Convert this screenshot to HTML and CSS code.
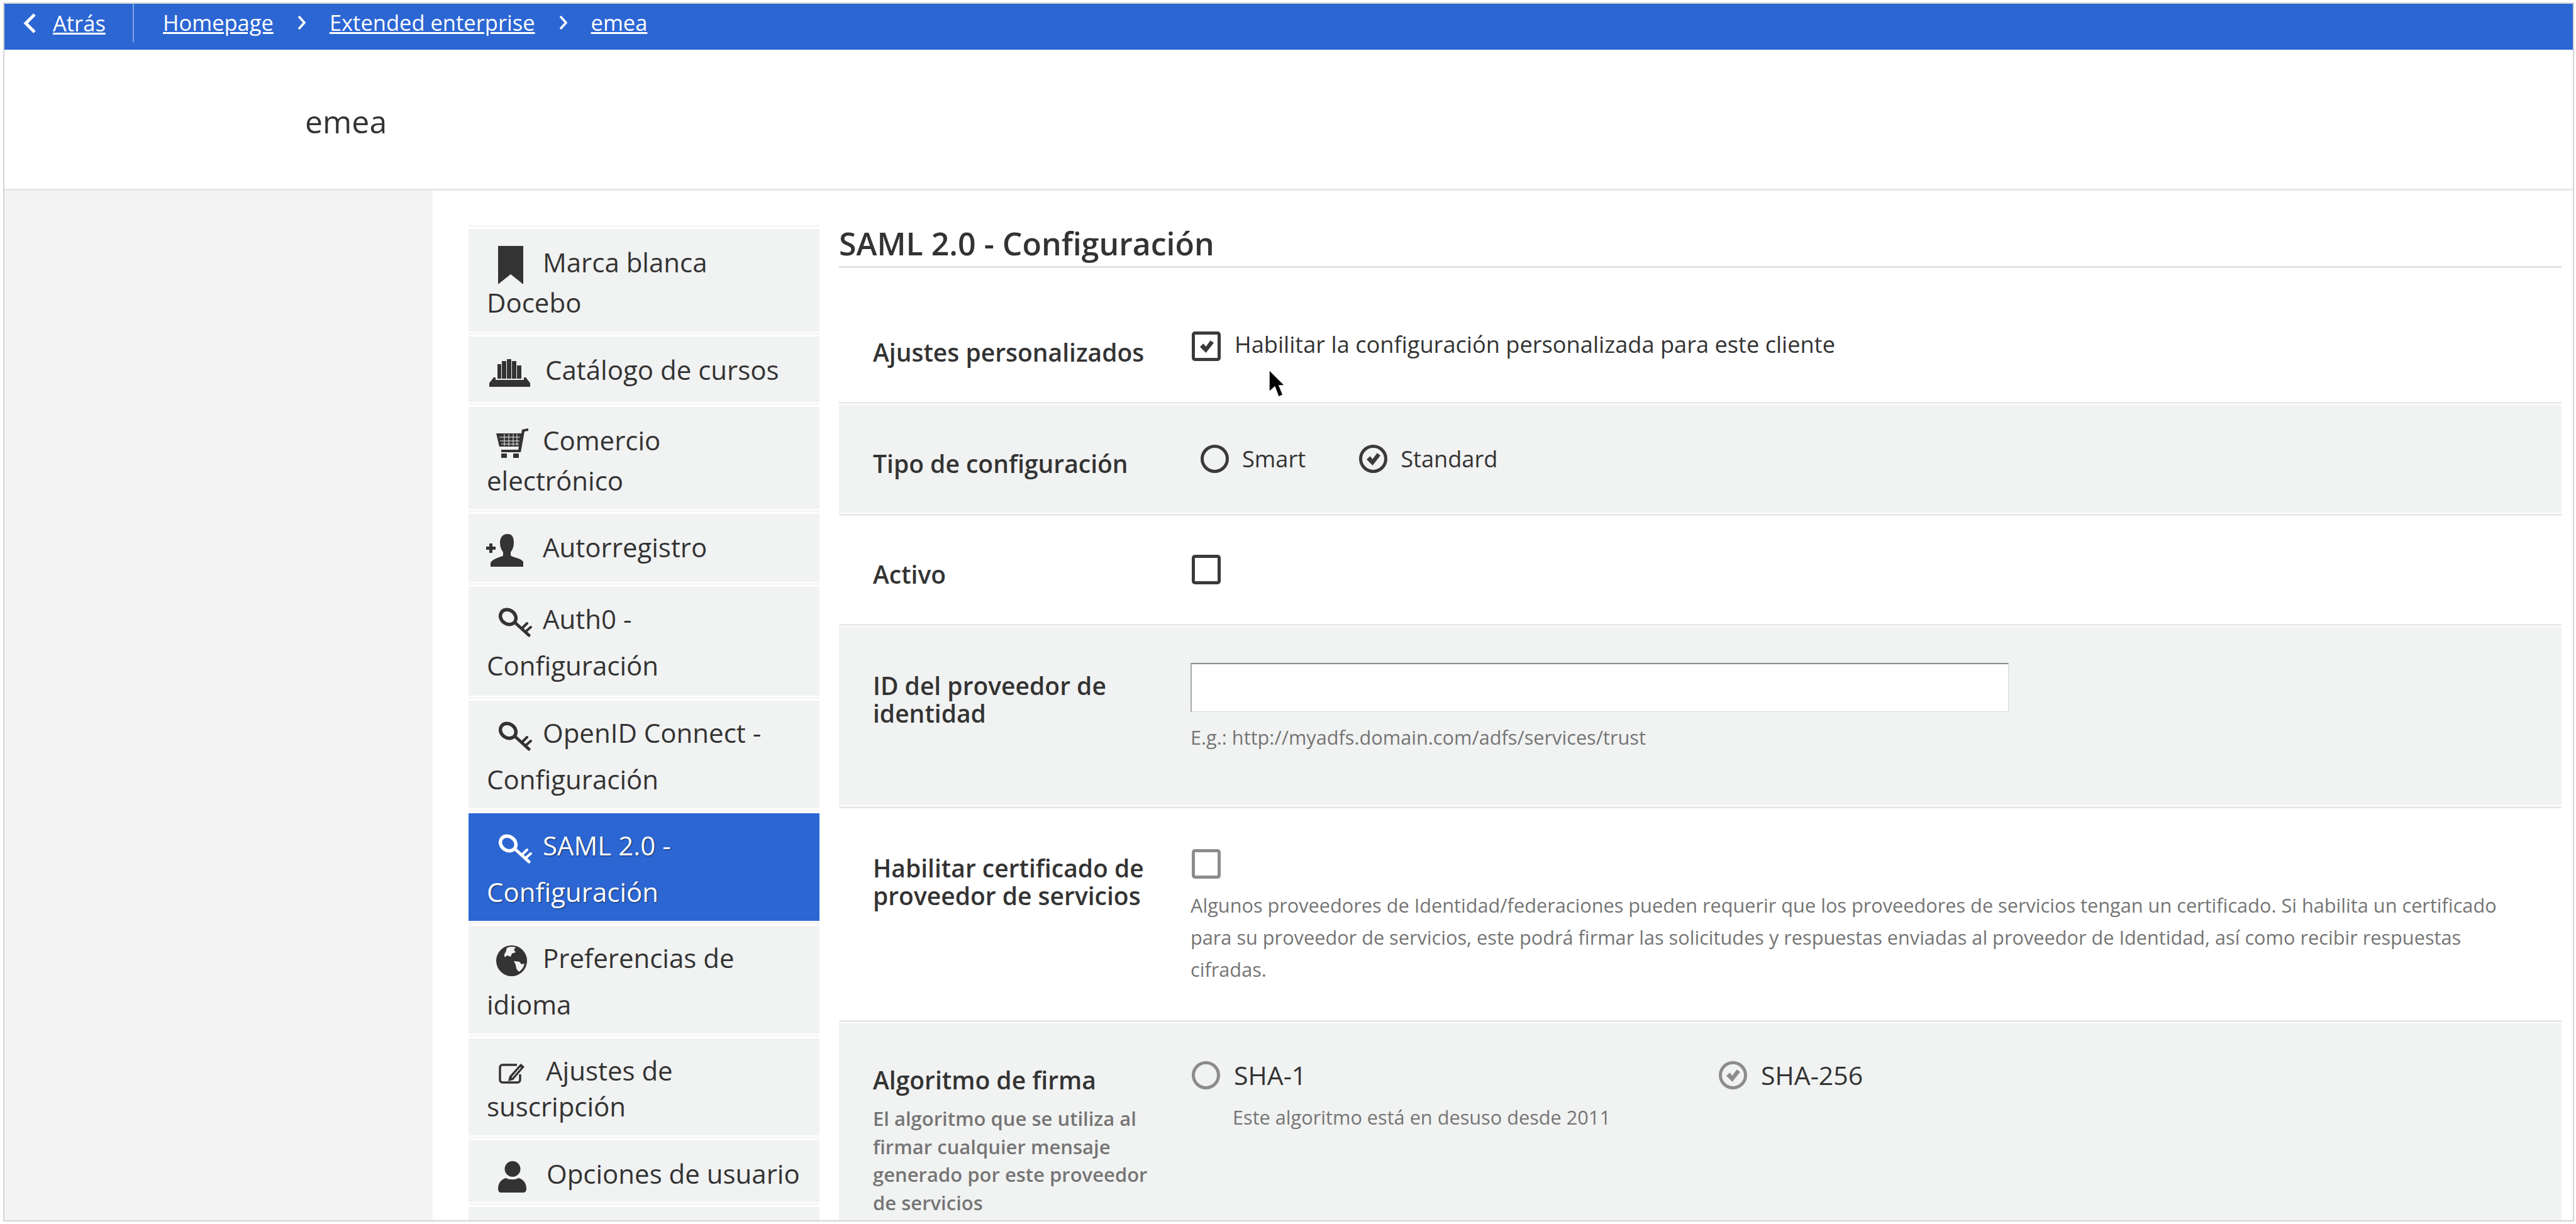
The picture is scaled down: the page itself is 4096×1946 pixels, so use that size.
FILE: index.html
```html
<!DOCTYPE html>
<html lang="es">
<head>
    <meta charset="UTF-8">
    <meta name="viewport" content="width=device-width, initial-scale=1.0">
    <title>SAML 2.0 - Configuración</title>
    <link rel="stylesheet" href="styles.css">
</head>
<body>
    <svg class="icon-defs" aria-hidden="true">
        <symbol id="icon-key" viewBox="0 0 54 49">
            <g fill="none" stroke="currentColor" stroke-linecap="round">
                <ellipse cx="16" cy="17" rx="13" ry="11" stroke-width="5.500" transform="rotate(35 16 17)"/>
                <path d="M27 26 49 46" stroke-width="5"/>
                <path d="M38 35 46 27M44 40 52 33" stroke-width="4"/>
            </g>
        </symbol>
        <symbol id="icon-tick" viewBox="0 0 24 24">
            <path d="M2 13 7 8l4 4.500L18 3l5 4L11 22z" fill="currentColor"/>
        </symbol>
    </svg>

    <div class="window">
        <nav class="topbar">
            <a class="back-link" href="#">
                <svg class="back-arrow" viewBox="0 0 21 32"><path d="M18 2 4 16l14 14" fill="none" stroke="currentColor" stroke-width="5"/></svg>
                <span>Atrás</span>
            </a>
            <div class="crumbs">
                <a href="#">Homepage</a>
                <svg class="crumb-arrow" viewBox="0 0 13 24"><path d="M2 2l9 10-9 10" fill="none" stroke="currentColor" stroke-width="3.500"/></svg>
                <a href="#">Extended enterprise</a>
                <svg class="crumb-arrow" viewBox="0 0 13 24"><path d="M2 2l9 10-9 10" fill="none" stroke="currentColor" stroke-width="3.500"/></svg>
                <a href="#">emea</a>
            </div>
        </nav>

        <header class="page-header">
            <h1>emea</h1>
        </header>

        <div class="main">
            <div class="left-gutter"></div>
            <div class="content">
                <ul class="side-menu">
                    <li>
                        <a class="menu-item item-marca" href="#">
                            <span class="menu-slot"><svg class="ico-bookmark" viewBox="0 0 40 61"><path d="M0 0h40v61L20 45 0 61z" fill="currentColor"/></svg></span>Marca blanca<br>Docebo
                        </a>
                    </li>
                    <li>
                        <a class="menu-item item-catalog" href="#">
                            <span class="menu-slot"><svg class="ico-catalog" viewBox="0 0 65 44"><path d="M13 8h6v23h-6zM20 3h7v28h-7zM28 0h7v31h-7zM36 3h7v28h-7zM44 10h7v21h-7zM0 44v-6l7-9h3v4h45v-4h3l7 9v6z" fill="currentColor"/></svg></span>Catálogo de cursos
                        </a>
                    </li>
                    <li>
                        <a class="menu-item item-shop" href="#">
                            <span class="menu-slot"><svg class="ico-cart" viewBox="0 0 51 47"><path d="M51 0v4l-6 1-6 33H8v-4h27l1-5H5L0 8h40l1-6z" fill="currentColor"/><path d="M5 14h33M6 20h31M8 25h28M13 9v19M20 9v19M27 9v19M33 9v19" stroke="#f1f2f2" stroke-width="1"/><path d="M8 40h9v7H8zM27 40h9v7h-9z" fill="currentColor"/></svg></span>Comercio<br>electrónico
                        </a>
                    </li>
                    <li>
                        <a class="menu-item item-signup" href="#">
                            <span class="menu-slot"><svg class="ico-useradd" viewBox="0 0 59 52"><path d="M34 0c-8 0-12 6-12 14 0 6 2 11 5 15v5c0 2-16 4-20 12v6h52v-8c-4-6-18-7-20-10v-5c3-4 5-9 5-15C44 6 42 0 34 0z" fill="currentColor"/><path d="M0 20h15v5H0zM5 15h5v15H5z" fill="currentColor"/></svg></span>Autorregistro
                        </a>
                    </li>
                    <li>
                        <a class="menu-item lh-74 item-auth" href="#">
                            <span class="menu-slot"><svg class="ico-key"><use href="#icon-key"/></svg></span>Auth0 -<br>Configuración
                        </a>
                    </li>
                    <li>
                        <a class="menu-item lh-74" href="#">
                            <span class="menu-slot"><svg class="ico-key"><use href="#icon-key"/></svg></span>OpenID Connect -<br>Configuración
                        </a>
                    </li>
                    <li>
                        <a class="menu-item lh-74 active" href="#">
                            <span class="menu-slot"><svg class="ico-key"><use href="#icon-key"/></svg></span>SAML 2.0 -<br>Configuración
                        </a>
                    </li>
                    <li>
                        <a class="menu-item lh-74" href="#">
                            <span class="menu-slot"><svg class="ico-globe" viewBox="0 0 49 49"><circle cx="24.500" cy="24.500" r="24.500" fill="currentColor"/><path d="M17 4c4-2 10-2 14-1l-3 4 3 4-6 2-2 5-6-2-3 3c-2-3-1-6 1-8zM28 25l9 1 3 4 5-1c-1 5-4 10-9 13l-4-5-1-6z" fill="#f1f2f2"/></svg></span>Preferencias de<br>idioma
                        </a>
                    </li>
                    <li>
                        <a class="menu-item lh-57 item-edit" href="#">
                            <span class="menu-slot"><svg class="ico-edit" viewBox="0 0 43 34"><path d="M30 3H7a4 4 0 0 0-4 4v20a4 4 0 0 0 4 4h24a4 4 0 0 0 4-4V18" fill="none" stroke="currentColor" stroke-width="3.500"/><path d="M36 1l6 5-18 21-8 2 2-8z" fill="currentColor"/><path d="M36 7 22 23" stroke="#f1f2f2" stroke-width="1.500"/></svg></span>Ajustes de<br>suscripción
                        </a>
                    </li>
                    <li>
                        <a class="menu-item item-user" href="#">
                            <span class="menu-slot"><svg class="ico-user" viewBox="0 0 45 50"><circle cx="23" cy="12.500" r="12.500" fill="currentColor"/><path d="M0 44c0-10 6-16 13-17 4 3 15 3 19 0 7 1 13 7 13 17 0 4-2 6-5 6H5c-3 0-5-2-5-6z" fill="currentColor"/></svg></span>Opciones de usuario
                        </a>
                    </li>
                    <li>
                        <a class="menu-item item-last" href="#"></a>
                    </li>
                </ul>

                <section class="settings">
                    <h2 class="settings-title">SAML 2.0 - Configuración</h2>

                    <div class="form-row row-custom">
                        <div class="row-label">Ajustes personalizados</div>
                        <div class="row-control check-line">
                            <span class="check-box"><svg class="tick"><use href="#icon-tick"/></svg></span>
                            <span>Habilitar la configuración personalizada para este cliente</span>
                        </div>
                        <svg class="cursor" viewBox="0 0 27 47"><path d="M1 1v35l9-8 6 16 7-3-6-15h9z" fill="#000" stroke="#fff" stroke-width="1.500"/></svg>
                    </div>
                    <hr class="row-line">

                    <div class="form-row shaded row-type">
                        <div class="row-label">Tipo de configuración</div>
                        <div class="row-control radio-line">
                            <span class="radio"></span><span class="radio-text">Smart</span>
                            <span class="radio"><svg class="tick"><use href="#icon-tick"/></svg></span><span class="radio-text">Standard</span>
                        </div>
                    </div>
                    <hr class="row-line">

                    <div class="form-row row-active">
                        <div class="row-label">Activo</div>
                        <div class="row-control"><span class="check-box"></span></div>
                    </div>
                    <hr class="row-line">

                    <div class="form-row shaded row-idp">
                        <div class="row-label">ID del proveedor de identidad</div>
                        <div class="row-control">
                            <input class="text-input" type="text">
                            <div class="hint hint-url">E.g.: http://myadfs.domain.com/adfs/services/trust</div>
                        </div>
                    </div>
                    <hr class="row-line">

                    <div class="form-row row-cert">
                        <div class="row-label">Habilitar certificado de proveedor de servicios</div>
                        <div class="row-control">
                            <span class="check-box muted"></span>
                            <div class="hint hint-cert">Algunos proveedores de Identidad/federaciones pueden requerir que los proveedores de servicios tengan un certificado. Si habilita un certificado para su proveedor de servicios, este podrá firmar las solicitudes y respuestas enviadas al proveedor de Identidad, así como recibir respuestas cifradas.</div>
                        </div>
                    </div>
                    <hr class="row-line">

                    <div class="form-row shaded row-algo">
                        <div class="row-label">
                            Algoritmo de firma
                            <div class="label-note">El algoritmo que se utiliza al firmar cualquier mensaje generado por este proveedor de servicios</div>
                        </div>
                        <div class="row-control algo-options">
                            <div class="algo-option">
                                <div class="algo-head"><span class="radio muted"></span><span>SHA-1</span></div>
                                <div class="hint">Este algoritmo está en desuso desde 2011</div>
                            </div>
                            <div class="algo-option">
                                <div class="algo-head"><span class="radio muted"><svg class="tick"><use href="#icon-tick"/></svg></span><span>SHA-256</span></div>
                            </div>
                        </div>
                    </div>
                </section>
            </div>
        </div>
    </div>
</body>
</html>
```

FILE: styles.css
```css
html, body {
    margin: 0;
    height: 100%;
    background: #ffffff;
    overflow: hidden;
}
body {
    font-family: "Open Sans", "Noto Sans", sans-serif;
    font-size: 36.200px;
    color: #333333;
}
.icon-defs {
    display: none;
}
.window {
    box-sizing: border-box;
    width: 4088px;
    height: 1938px;
    margin: 4px 0 0 5px;
    border: 2px solid #d4d4d4;
    background: #ffffff;
    overflow: hidden;
}

/* top bar */
.topbar {
    display: flex;
    align-items: center;
    height: 73px;
    background-color: #2c66d3;
    color: #ffffff;
    font-size: 34.500px;
}
.topbar a {
    color: #ffffff;
}
.back-link {
    display: flex;
    align-items: center;
    box-sizing: border-box;
    width: 206px;
    height: 61px;
    margin-bottom: 12px;
    padding-left: 30px;
    border-right: 2px solid #7fa3e6;
}
.back-arrow {
    width: 21px;
    height: 32px;
    margin-right: 26px;
}
.crumbs {
    display: flex;
    align-items: center;
    margin-left: 46px;
    margin-bottom: 14px;
}
.crumb-arrow {
    width: 13px;
    height: 24px;
    margin: 0 38px;
}

/* page header */
.page-header {
    box-sizing: border-box;
    height: 224px;
    padding: 84px 0 0 478px;
    border-bottom: 3px solid #e6e6e6;
}
.page-header h1 {
    margin: 0;
    font-size: 50px;
    font-weight: 500;
    line-height: 60px;
}

.main {
    display: flex;
    height: 1640px;
}
.left-gutter {
    flex: 0 0 681px;
    background-color: #f4f4f4;
}
.content {
    display: flex;
    flex: 1;
    align-items: flex-start;
    padding: 55px 18px 0 57px;
}

/* side menu */
.side-menu {
    flex: 0 0 558px;
    margin: 0 31px 0 0;
    padding: 0;
    list-style: none;
}
.side-menu li {
    padding-top: 3px;
    border-top: 3px solid #f6f6f6;
}
.menu-item {
    display: block;
    box-sizing: border-box;
    height: 162px;
    margin-bottom: 2px;
    padding: 21px 20px 0 29px;
    background-color: #f1f2f2;
    color: #333333;
    font-size: 42px;
    line-height: 64px;
    text-decoration: none;
}
.item-marca {
    height: 163px;
}
.lh-74 {
    height: 171px;
    padding-top: 14px;
    line-height: 74px;
}
.lh-57 {
    height: 154px;
    padding-top: 22px;
    line-height: 57px;
}
.item-auth {
    height: 173px;
}
.item-catalog {
    height: 104px;
    padding-top: 21px;
}
.item-signup {
    height: 108px;
}
.item-user {
    height: 98px;
}
.item-last {
    height: 40px;
}
.menu-item.active {
    background-color: #2c66d3;
    color: #ffffff;
    text-shadow: 1px 1px 2px rgba(0, 0, 0, 0.55);
}
.menu-slot {
    display: inline-block;
    width: 89px;
    vertical-align: middle;
    line-height: 0;
}
.item-catalog .menu-slot {
    width: 93px;
}
.item-edit .menu-slot {
    width: 94px;
}
.item-user .menu-slot {
    width: 95px;
}
.menu-slot svg {
    vertical-align: middle;
}
.ico-bookmark { width: 40px; height: 61px; margin: -10px 0 -10px 18px; }
.ico-catalog { width: 65px; height: 44px; margin-left: 4px; }
.ico-cart { width: 51px; height: 47px; margin-left: 15px; }
.ico-useradd { width: 59px; height: 52px; margin-left: -1px; }
.ico-key { width: 54px; height: 49px; margin-left: 18px; }
.ico-globe { width: 49px; height: 49px; margin-left: 15px; }
.ico-edit { width: 43px; height: 34px; margin-left: 18px; }
.ico-user { width: 45px; height: 50px; margin-left: 18px; }

/* settings form */
.settings {
    flex: 1;
}
.settings-title {
    margin: 0 0 1px;
    padding-bottom: 7px;
    border-bottom: 3px solid #e3e3e3;
    font-size: 50px;
    font-weight: 600;
    line-height: 58px;
}
.form-row {
    position: relative;
    display: grid;
    grid-template-columns: 507px 1fr;
    padding-left: 54px;
}
.form-row.shaded {
    background-color: #f1f2f2;
}
.row-line {
    height: 3px;
    margin: 2px 0;
    border: 0;
    background-color: #e8e8e8;
}
.row-label {
    font-size: 39px;
    font-weight: 600;
    line-height: 44px;
}
.row-custom { height: 210px; }
.row-custom .row-label { padding-top: 111px; }
.row-custom .row-control { padding-top: 100px; }
.row-type { height: 171px; }
.row-type .row-label { padding-top: 71px; }
.row-type .row-control { padding-top: 63px; }
.row-active { height: 168px; }
.row-active .row-label { padding-top: 69px; }
.row-active .row-control { padding-top: 60px; }
.row-idp { height: 283px; }
.row-idp .row-label { padding-top: 71px; }
.row-idp .row-control { padding-top: 57px; }
.row-cert { height: 333px; }
.row-cert .row-label { padding-top: 71px; }
.row-cert .row-control { padding-top: 63px; }
.row-algo { height: 340px; }
.row-algo .row-label { padding-top: 68px; }
.row-algo .row-control { padding-top: 60px; }

.check-line {
    display: flex;
    align-items: flex-start;
    gap: 22px;
    line-height: 40px;
}
.check-box {
    display: flex;
    align-items: center;
    justify-content: center;
    box-sizing: border-box;
    width: 46px;
    height: 47px;
    border: 5px solid #3a3a3a;
    border-radius: 5px;
    color: #3a3a3a;
}
.check-box.muted {
    border-color: #8c8c8c;
}
.tick {
    width: 25px;
    height: 25px;
}
.radio-line {
    display: flex;
    align-items: flex-start;
    margin-left: 14px;
    line-height: 44px;
}
.radio {
    display: flex;
    flex: none;
    align-items: center;
    justify-content: center;
    box-sizing: border-box;
    width: 45px;
    height: 45px;
    border: 5px solid #3a3a3a;
    border-radius: 50%;
    color: #3a3a3a;
}
.radio.muted {
    border-color: #8c8c8c;
    color: #8c8c8c;
}
.radio-text {
    margin: 0 85px 0 21px;
}
.text-input {
    display: block;
    box-sizing: border-box;
    width: 1301px;
    height: 78px;
    margin-left: -2px;
    border: 1px solid #d6d6d6;
    border-top: 2px solid #8a8a8a;
    border-left: 2px solid #a8a8a8;
    background: #ffffff;
}
.hint {
    color: #757575;
    font-size: 30.700px;
    line-height: 51px;
}
.hint-url {
    margin: 15px 0 0 -2px;
}
.hint-cert {
    margin: 17px 0 0 -2px;
    padding-right: 60px;
}
.label-note {
    margin-top: 17px;
    padding-right: 40px;
    color: #757575;
    font-size: 31px;
    line-height: 44.500px;
}
.algo-options {
    display: grid;
    grid-template-columns: 838px 1fr;
}
.algo-head {
    display: flex;
    align-items: center;
    gap: 22px;
    font-size: 41px;
    line-height: 45px;
}
.algo-option .hint {
    margin: 19px 0 0 65px;
}
.cursor {
    position: absolute;
    left: 683px;
    top: 160px;
    width: 27px;
    height: 47px;
}
```
